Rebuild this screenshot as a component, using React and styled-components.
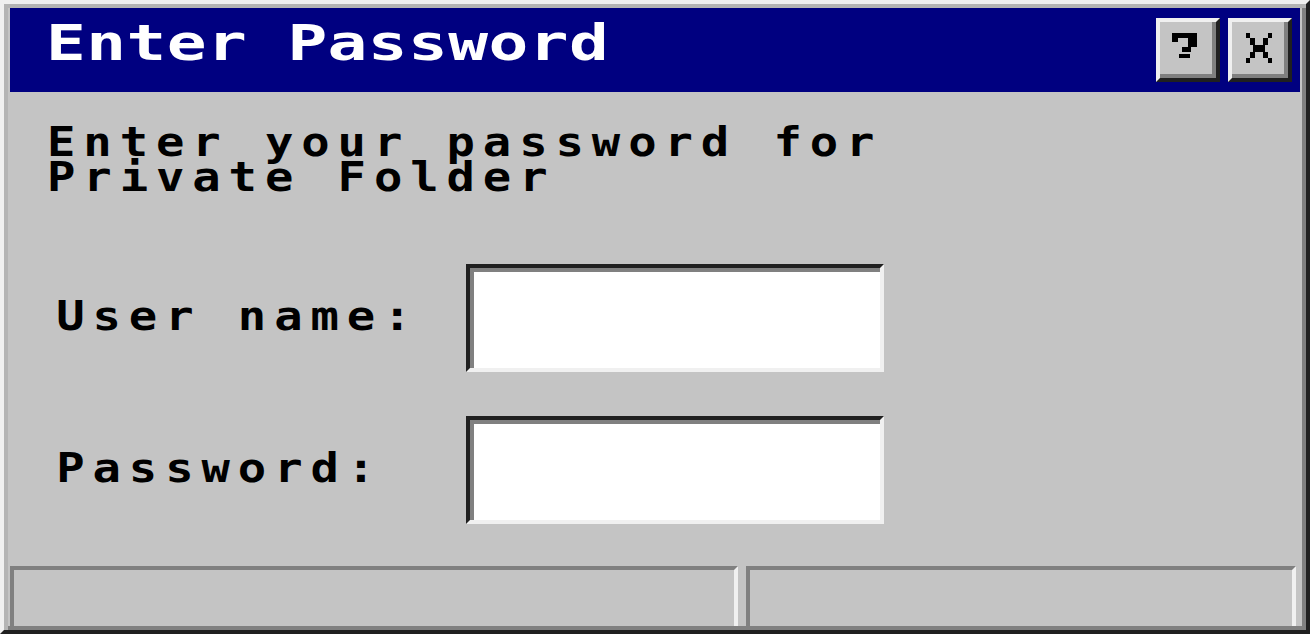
import React from "react";
import styled, { createGlobalStyle } from "styled-components";

const Global = createGlobalStyle`
  html, body { margin: 0; padding: 0; background: #c4c4c4; }
  body { font-family: "DejaVu Sans Mono", "Liberation Mono", monospace; }
`;

const Window = styled.div`
  box-sizing: border-box;
  width: 1310px;
  height: 634px;
  padding: 4px;
  background: #c4c4c4;
  border: 4px solid;
  border-color: #f0f0f0 #202020 #202020 #f0f0f0;
  box-shadow: inset 4px 4px 0 #b4b4b4, inset -4px -4px 0 #808080;
  display: flex;
  flex-direction: column;
  overflow: hidden;
`;

const TitleBar = styled.div`
  height: 84px;
  margin: 0 2px;
  background: #000080;
  display: flex;
  align-items: flex-start;
  justify-content: space-between;
  padding: 0 8px 0 36px;
`;

const TitleText = styled.div`
  margin-top: 11px;
  color: #ffffff;
  font-family: "DejaVu Sans Mono", monospace;
  font-weight: bold;
  font-size: 49px;
  line-height: 49px;
  letter-spacing: 0.3px;
  white-space: pre;
  transform: scaleX(1.35);
  transform-origin: left center;
`;

const TitleButtons = styled.div`
  display: flex;
  gap: 8px;
  margin-top: 10px;
`;

const TitleButton = styled.button`
  box-sizing: border-box;
  width: 64px;
  height: 64px;
  padding: 0;
  margin: 0;
  background: #c4c4c4;
  border: 4px solid;
  border-color: #f0f0f0 #202020 #202020 #f0f0f0;
  box-shadow: inset -4px -4px 0 #808080;
  position: relative;
  cursor: default;
  svg {
    position: absolute;
    left: -4px;
    top: -4px;
    width: 64px;
    height: 64px;
  }
`;

const Body = styled.div`
  padding-left: 39px;
  display: flex;
  flex-direction: column;
  align-items: flex-start;
`;

const Message = styled.div`
  margin-top: 33px;
  font-family: "DejaVu Sans Mono", monospace;
  font-weight: bold;
  font-size: 41px;
  line-height: 35px;
  letter-spacing: 6.9px;
  color: #000;
  white-space: pre;
  transform: scaleX(1.15);
  transform-origin: left center;
`;

const Form = styled.div`
  margin-top: 69px;
  display: grid;
  grid-template-columns: 419px 418px;
  row-gap: 44px;
  align-items: center;
  justify-items: start;
`;

const Label = styled.label`
  padding-left: 8px;
  margin-top: -3px;
  font-family: "DejaVu Sans Mono", monospace;
  font-weight: bold;
  font-size: 41px;
  line-height: 35px;
  letter-spacing: 6.9px;
  color: #000;
  white-space: pre;
  transform: scaleX(1.15);
  transform-origin: left center;
`;

const Field = styled.input`
  box-sizing: border-box;
  width: 418px;
  height: 108px;
  margin: 0;
  padding: 0 12px;
  background: #ffffff;
  border: 4px solid;
  border-color: #202020 #f0f0f0 #f0f0f0 #202020;
  box-shadow: inset 4px 4px 0 #808080;
  outline: none;
  font-family: "DejaVu Sans Mono", monospace;
  font-size: 36px;
`;

const StatusBar = styled.div`
  margin-top: auto;
  display: flex;
  gap: 8px;
  padding: 0 6px 0 2px;
`;

const StatusPanel = styled.div`
  box-sizing: border-box;
  height: 60px;
  flex: ${(p) => (p.$width ? `0 0 ${p.$width}px` : "1 1 auto")};
  border-top: 4px solid #808080;
  border-left: 4px solid #808080;
  border-right: 4px solid #f0f0f0;
`;

const HelpIcon = () => (
  <svg viewBox="0 0 64 64" aria-hidden="true">
    <g fill="#000">
      <rect x="17" y="15" width="22" height="5" />
      <rect x="16" y="15" width="6" height="9" />
      <rect x="32" y="15" width="9" height="14" />
      <rect x="26" y="29" width="9" height="5" />
      <rect x="23" y="36" width="11" height="4" />
    </g>
  </svg>
);

const CloseIcon = () => (
  <svg viewBox="0 0 64 64" aria-hidden="true">
    <g fill="#000">
      <rect x="18" y="15" width="4" height="5" />
      <rect x="40" y="15" width="4" height="5" />
      <rect x="22" y="20" width="5" height="7" />
      <rect x="35" y="20" width="5" height="7" />
      <rect x="25" y="27" width="12" height="7" />
      <rect x="22" y="34" width="5" height="6" />
      <rect x="35" y="34" width="5" height="6" />
      <rect x="18" y="40" width="4" height="5" />
      <rect x="40" y="40" width="4" height="5" />
    </g>
  </svg>
);

export default function App() {
  return (
    <>
      <Global />
      <Window>
        <TitleBar>
          <TitleText>Enter Password</TitleText>
          <TitleButtons>
            <TitleButton aria-label="Help">
              <HelpIcon />
            </TitleButton>
            <TitleButton aria-label="Close">
              <CloseIcon />
            </TitleButton>
          </TitleButtons>
        </TitleBar>
        <Body>
          <Message>
            {"Enter your password for\nPrivate Folder"}
          </Message>
          <Form>
            <Label htmlFor="user">User name:</Label>
            <Field id="user" type="text" />
            <Label htmlFor="pass">Password:</Label>
            <Field id="pass" type="password" />
          </Form>
        </Body>
        <StatusBar>
          <StatusPanel $width={728} />
          <StatusPanel />
        </StatusBar>
      </Window>
    </>
  );
}
